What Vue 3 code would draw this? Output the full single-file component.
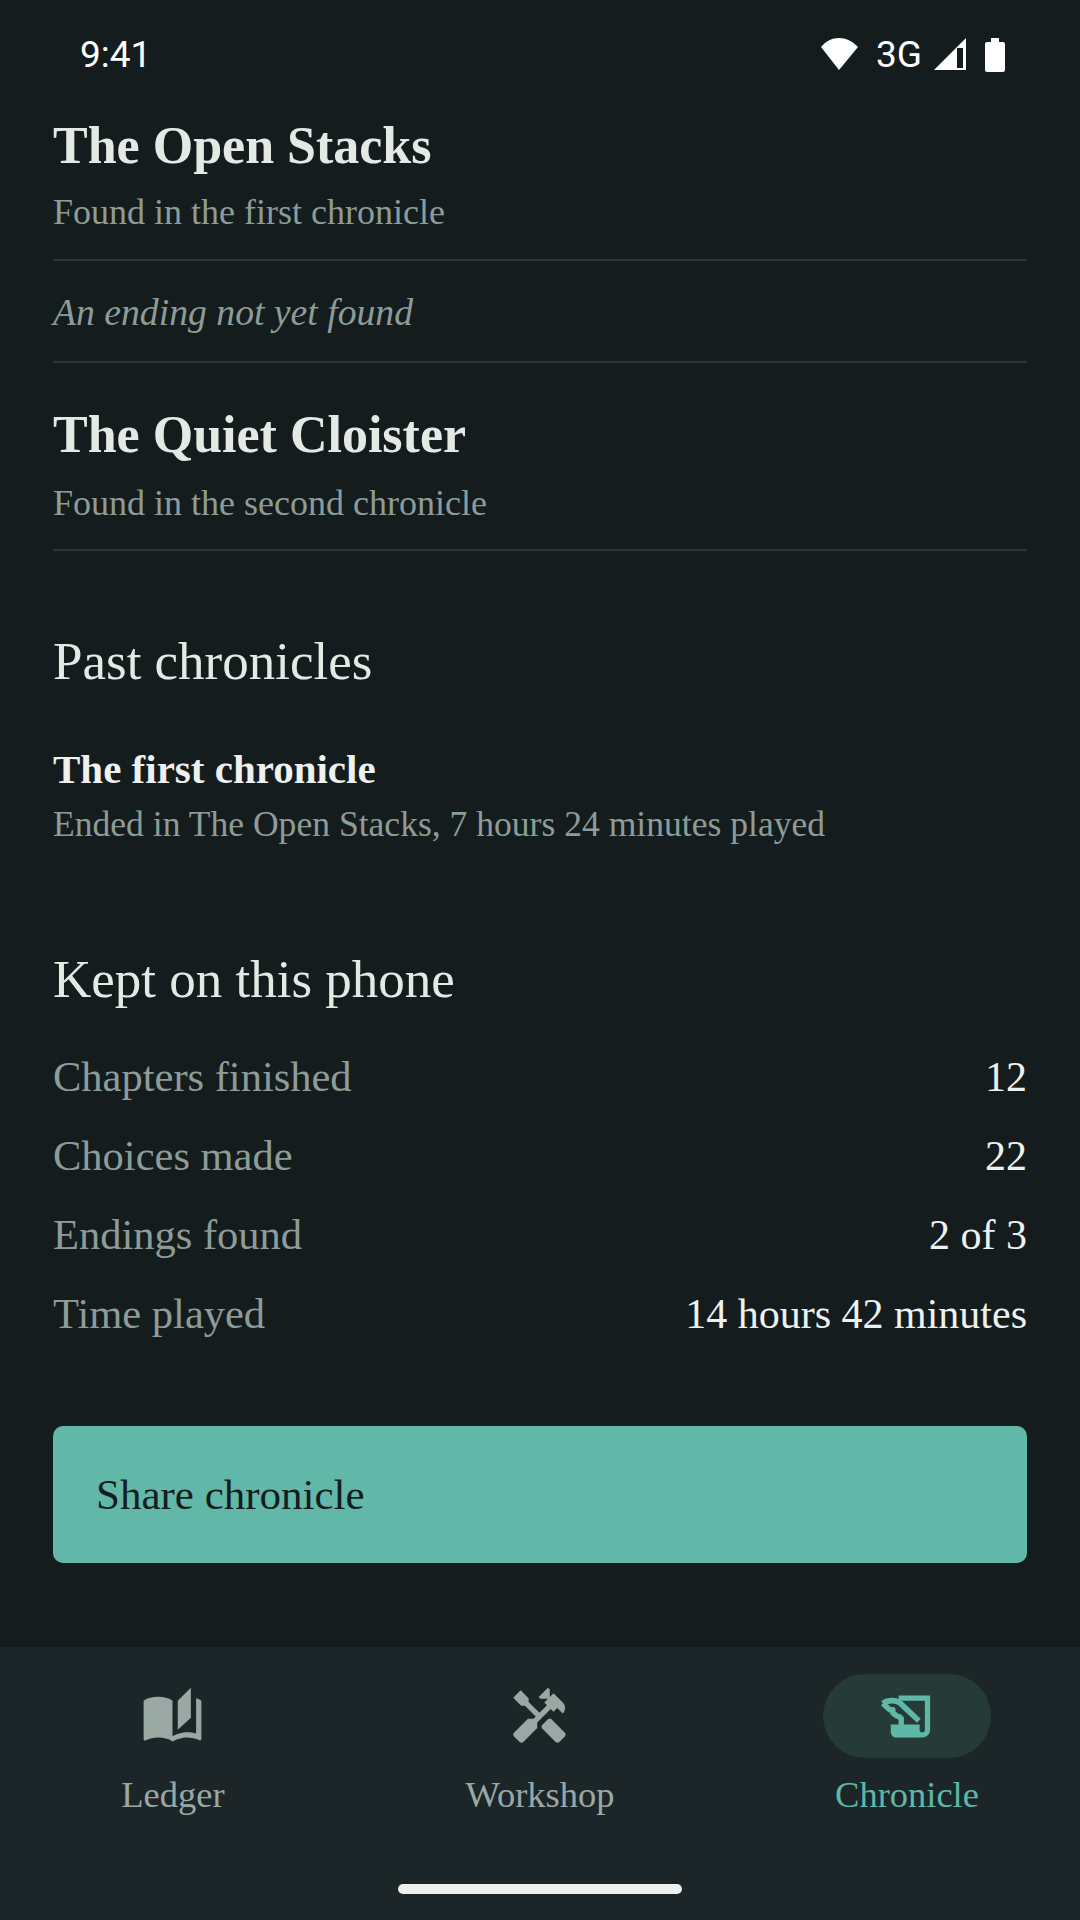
<script setup>
const endings = [
  { kind: 'found', title: 'The Open Stacks', note: 'Found in the first chronicle' },
  { kind: 'missing', note: 'An ending not yet found' },
  { kind: 'found', title: 'The Quiet Cloister', note: 'Found in the second chronicle' },
]
const stats = [
  ['Chapters finished', '12'],
  ['Choices made', '22'],
  ['Endings found', '2 of 3'],
  ['Time played', '14 hours 42 minutes'],
]
</script>

<template>
  <div class="phone">
    <header class="status">
      <span class="time">9:41</span>
      <div class="status-right">
        <svg class="wifi" width="40" height="34" viewBox="0 0 40 34"><path d="M19 33 1 10C6 4 12 1 19 1s13 3 19 9z" fill="#fff"/></svg>
        <span class="net">3G</span>
        <svg class="signal" width="32" height="32" viewBox="0 0 32 32"><path fill-rule="evenodd" d="M32 0v32H0zM23 10v20h6V10z" fill="#fff"/></svg>
        <svg class="battery" width="20" height="34" viewBox="0 0 20 34"><path d="M6 0h8v4h4a2 2 0 0 1 2 2v26a2 2 0 0 1-2 2H2a2 2 0 0 1-2-2V6a2 2 0 0 1 2-2h4z" fill="#fff"/></svg>
      </div>
    </header>

    <main class="content">
      <section class="endings">
        <div v-for="e in endings" :key="e.note" class="ending" :class="e.kind">
          <h2 v-if="e.title" class="ending-title">{{ e.title }}</h2>
          <p class="ending-note">{{ e.note }}</p>
        </div>
      </section>

      <h3 class="section-title past">Past chronicles</h3>
      <div class="past-item">
        <div class="past-name">The first chronicle</div>
        <div class="past-note">Ended in The Open Stacks, 7 hours 24 minutes played</div>
      </div>

      <h3 class="section-title kept">Kept on this phone</h3>
      <div class="stats">
        <div v-for="s in stats" :key="s[0]" class="stat">
          <span class="stat-label">{{ s[0] }}</span>
          <span class="stat-value">{{ s[1] }}</span>
        </div>
      </div>

      <button class="share">Share chronicle</button>
    </main>

    <nav class="nav">
      <div class="tab">
        <div class="pill">
          <svg width="63" height="63" viewBox="0 0 24 24"><path fill="currentColor" d="M19 1l-5 5v11l5-4.5V1zM1 6v14.65c0 .25.25.5.5.5.1 0 .15-.05.25-.05C3.1 20.45 5.05 20 6.5 20c1.95 0 4.05.4 5.5 1.5V6c-1.45-1.1-3.55-1.5-5.5-1.5S2.45 4.9 1 6zm22 13.5V6c-.6-.45-1.25-.75-2-1v13.5c-1.1-.35-2.3-.5-3.5-.5-1.7 0-4.15.65-5.5 1.5v2c1.35-.85 3.8-1.5 5.5-1.5 1.65 0 3.35.3 4.75 1.05.1.05.15.05.25.05.25 0 .5-.25.5-.5v-1.1z"/></svg>
        </div>
        <span class="tab-label">Ledger</span>
      </div>
      <div class="tab">
        <div class="pill">
          <svg width="63" height="63" viewBox="0 0 24 24"><path fill="currentColor" d="M21.67 18.17l-5.3-5.3h-.99l-2.54 2.54v.99l5.3 5.3c.39.39 1.02.39 1.41 0l2.12-2.12c.39-.38.39-1.02 0-1.41z"/><path fill="currentColor" d="M17.34 10.19l1.41-1.41 2.12 2.12c1.17-1.17 1.17-3.07 0-4.24l-3.54-3.54-1.41 1.41V1.71l-.7-.71-3.54 3.54.71.71h2.83l-1.41 1.41 1.06 1.06-2.89 2.89-4.13-4.13V5.06L4.83 2.04 2 4.87 5.03 7.9h1.41l4.13 4.13-.85.85H7.6l-5.3 5.3c-.39.39-.39 1.02 0 1.41l2.12 2.12c.39.39 1.02.39 1.41 0l5.3-5.3v-2.12l5.15-5.15 1.06 1.05z"/></svg>
        </div>
        <span class="tab-label">Workshop</span>
      </div>
      <div class="tab active">
        <div class="pill">
          <svg width="63" height="63" viewBox="0 0 24 24">
            <path fill="currentColor" d="M9 4h12v13a3 3 0 0 1-3 3H8a2 2 0 0 1-2-2v-3h11v2a1 1 0 0 0 2 0V6H9z"/>
            <path fill="currentColor" d="M9 12h2v4H9z"/>
            <path fill="none" stroke="currentColor" stroke-width="2.1" stroke-linejoin="round" d="M3 7c2-1.4 5-1.4 6.7 0l7 6.6M3 7l2.6 2.4h1.2v1.2c1 1 2.2 1.6 3.4 1.8"/>
          </svg>
        </div>
        <span class="tab-label">Chronicle</span>
      </div>
      <div class="home"></div>
    </nav>
  </div>
</template>

<style>
html, body { margin: 0; background: #141c1e; }
</style>

<style scoped>
.phone {
  width: 1080px;
  height: 1920px;
  display: flex;
  flex-direction: column;
  background: #141c1e;
  font-family: "Liberation Serif", serif;
  color: #e4e9e4;
  overflow: hidden;
}
.status {
  height: 108px;
  flex: none;
  box-sizing: border-box;
  padding: 0 75px 0 80px;
  display: flex;
  justify-content: space-between;
  align-items: flex-start;
  font-family: Roboto, sans-serif;
  font-size: 37px;
  color: #fff;
}
.time, .net { line-height: 110px; height: 108px; }
.status-right { display: flex; align-items: flex-start; height: 108px; }
.wifi { margin-top: 37px; }
.net { margin-left: 16px; }
.signal { margin: 38px 0 0 12px; }
.battery { margin: 38px 0 0 19px; }

.content {
  flex: 1;
  padding: 0 53px;
  min-height: 0;
}
.ending { border-bottom: 2px solid #2c3537; box-sizing: border-box; }
.ending-title {
  margin: 0;
  font-size: 52px;
  line-height: 70px;
  font-weight: 700;
  color: #e4e9e4;
}
.ending:nth-child(1) { height: 153px; padding-top: 3px; }
.ending:nth-child(3) { height: 188px; padding-top: 37px; }
.ending:nth-child(3) .ending-note { padding-top: 11px; }
.ending-note {
  margin: 0;
  font-size: 36px;
  line-height: 44px;
  padding-top: 9px;
  color: #8d9c98;
}
.ending.missing { height: 102px; padding-top: 29px; }
.ending.missing .ending-note { font-style: italic; font-size: 37.7px; padding: 0; }

.section-title {
  margin: 0;
  font-size: 53px;
  line-height: 60px;
  font-weight: 400;
  color: #e4e9e4;
}
.past { margin-top: 80px; }
.past-item { margin-top: 53px; }
.past-name { font-size: 41px; line-height: 50px; font-weight: 700; color: #eef1ee; }
.past-note { font-size: 35.6px; line-height: 44px; margin-top: 8px; color: #8d9c98; }
.kept { margin-top: 103px; }
.stats { margin-top: 28px; }
.stat {
  height: 79px;
  display: flex;
  justify-content: space-between;
  align-items: center;
  font-size: 42.5px;
}
.stat-label { color: #8d9c98; }
.stat-value { color: #eef1ee; font-size: 42px; }
.share {
  display: block;
  width: 100%;
  height: 137px;
  margin-top: 73px;
  padding: 0 0 0 43px;
  border: 0;
  border-radius: 10px;
  background: #62b8a8;
  color: #141c1e;
  font-family: inherit;
  font-size: 43px;
  text-align: left;
}

.nav {
  height: 273px;
  flex: none;
  position: relative;
  box-sizing: border-box;
  padding: 27px 89px 0;
  display: flex;
  justify-content: space-between;
  background: #1c2629;
  color: #9aa8a4;
}
.tab { width: 168px; display: flex; flex-direction: column; align-items: center; white-space: nowrap; }
.pill {
  width: 168px;
  height: 84px;
  box-sizing: border-box;
  padding-right: 2px;
  border-radius: 42px;
  display: flex;
  align-items: center;
  justify-content: center;
}
.tab-label { margin-top: 15px; font-size: 36.5px; line-height: 44px; }
.tab.active { color: #5fb8a7; }
.tab.active .pill { background: #263a38; }
.home {
  position: absolute;
  left: 398px;
  bottom: 26px;
  width: 284px;
  height: 10px;
  border-radius: 5px;
  background: #eef1ee;
}
</style>
